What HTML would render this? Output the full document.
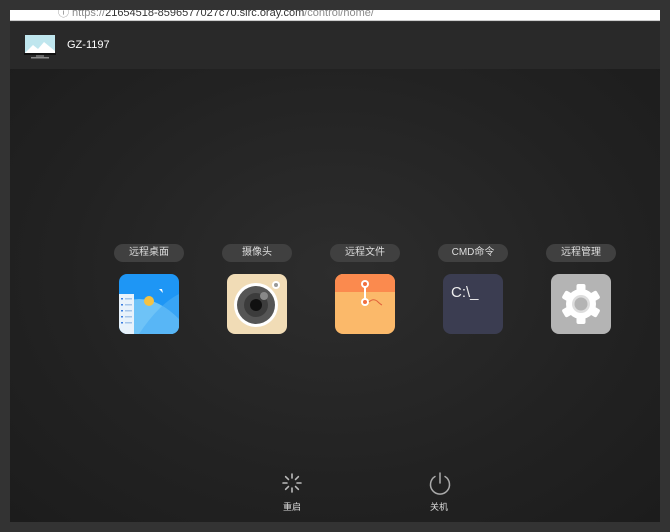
<!DOCTYPE html>
<html><head><meta charset="utf-8"><style>
*{margin:0;padding:0;box-sizing:border-box}
body{width:670px;height:532px;background:#333;position:relative;overflow:hidden;font-family:"Liberation Sans","Noto Sans CJK SC",sans-serif}
.bar{position:absolute;left:10px;top:10px;width:650px;height:11px;background:#fff;border-bottom:1px solid #ccc;overflow:hidden}
.bar span{position:absolute;left:48px;top:-6px;font-size:11px;color:#8a8a8a;white-space:nowrap}
.bar span b{color:#333;font-weight:normal}
.hdr{position:absolute;left:10px;top:22px;width:650px;height:47px;background:#292929}
.main{position:absolute;left:10px;top:69px;width:650px;height:453px;background:radial-gradient(ellipse at 50% 45%,#2d2d2d 0%,#222 60%,#1c1c1c 100%)}
.pill{position:absolute;top:244px;width:70px;height:18px;border-radius:9px;background:#404040;color:#ddd;font-size:10px;text-align:center;line-height:18px}
.ic{position:absolute;top:274px;width:60px;height:60px;border-radius:8px;overflow:hidden}
.lbl{position:absolute;top:500px;color:#ddd;font-size:9px;width:40px;text-align:center}
</style></head><body>
<div class="bar"><span>ⓘ https://<b>21654518-8596577027c70.sirc.oray.com</b>/control/home/</span></div>
<div class="hdr">
<svg style="position:absolute;left:14px;top:12px" width="32" height="26" viewBox="0 0 32 26"><rect x="1" y="1" width="30" height="18" fill="#bfe6ee"/><path d="M1 19 L9 11 L14 15 L20 8 L31 17 L31 19Z" fill="#fff"/><rect x="0" y="19" width="32" height="2" fill="#111"/><rect x="12" y="21" width="8" height="2" fill="#666"/><rect x="7" y="23" width="18" height="1.5" fill="#888"/></svg>
<div style="position:absolute;left:57px;top:17px;color:#fff;font-size:11px">GZ-1197</div>
</div>
<div class="main"></div>
<div class="pill" style="left:114px">远程桌面</div>
<div class="pill" style="left:222px">摄像头</div>
<div class="pill" style="left:330px">远程文件</div>
<div class="pill" style="left:438px">CMD命令</div>
<div class="pill" style="left:546px">远程管理</div>

<div class="ic" style="left:119px;background:#1e96f5">
<svg width="60" height="60"><path d="M0 30 Q30 15 60 45 L60 60 L0 60Z" fill="#6ec3f7"/><path d="M20 60 Q40 30 60 20 L60 60Z" fill="#4aaef5" opacity=".6"/><circle cx="30" cy="27" r="5" fill="#f5c242"/><path d="M40 15 l4 4 l-1 -4z" fill="#fff"/><rect x="0" y="20" width="15" height="40" fill="#e8f2fb"/><g fill="#3a7de0"><rect x="2" y="24" width="2" height="1.5"/><rect x="2" y="30" width="2" height="1.5"/><rect x="2" y="36" width="2" height="1.5"/><rect x="2" y="42" width="2" height="1.5"/><rect x="2" y="48" width="2" height="1.5"/></g><g fill="#a5c5ea"><rect x="6" y="24" width="7" height="1.5"/><rect x="6" y="30" width="7" height="1.5"/><rect x="6" y="36" width="7" height="1.5"/><rect x="6" y="42" width="7" height="1.5"/><rect x="6" y="48" width="7" height="1.5"/></g></svg></div>
<div class="ic" style="left:227px;background:#f1dcb6">
<svg width="60" height="60"><circle cx="29" cy="31" r="22" fill="#fff"/><circle cx="29" cy="31" r="19" fill="#555"/><circle cx="29" cy="31" r="12" fill="#3c3c3c"/><circle cx="29" cy="31" r="6" fill="#111"/><circle cx="37" cy="22" r="4" fill="#888"/><circle cx="49" cy="11" r="4" fill="#fff"/><circle cx="49" cy="11" r="2" fill="#999"/></svg></div>
<div class="ic" style="left:335px;background:#fbb96a">
<svg width="60" height="60"><rect width="60" height="18" fill="#fb8a4e"/><line x1="30" y1="10" x2="30" y2="28" stroke="#fff" stroke-width="2"/><circle cx="30" cy="10" r="4" fill="#fff"/><circle cx="30" cy="10" r="2" fill="#f07040"/><circle cx="30" cy="28" r="4" fill="#fff"/><circle cx="30" cy="28" r="2" fill="#f07040"/><path d="M34 28 Q38 24 42 27 Q45 30 47 31" stroke="#e0603a" fill="none"/></svg></div>
<div class="ic" style="left:443px;background:#3b3d51"><div style="position:absolute;left:8px;top:10px;color:#eee;font-size:15px">C:\_</div></div>
<div class="ic" style="left:551px;background:#b4b4b4">
<svg width="60" height="60" viewBox="0 0 60 60"><g fill="#fff" transform="translate(30,30)"><circle r="15"/><g id="t"><rect x="-4.5" y="-20" width="9" height="8" rx="2"/></g><use href="#t" transform="rotate(60)"/><use href="#t" transform="rotate(120)"/><use href="#t" transform="rotate(180)"/><use href="#t" transform="rotate(240)"/><use href="#t" transform="rotate(300)"/></g><circle cx="30" cy="30" r="9" fill="#ddd"/><circle cx="30" cy="30" r="6.5" fill="#b4b4b4"/></svg></div>

<svg style="position:absolute;left:281px;top:472px" width="22" height="22" viewBox="-11 -11 22 22" stroke="#bbb" stroke-width="1.6" stroke-linecap="round"><g id="r"><line x1="0" y1="-9" x2="0" y2="-5"/></g><use href="#r" transform="rotate(45)"/><use href="#r" transform="rotate(90)"/><use href="#r" transform="rotate(135)"/><use href="#r" transform="rotate(180)"/><use href="#r" transform="rotate(225)"/><use href="#r" transform="rotate(270)"/><use href="#r" transform="rotate(315)"/></svg>
<div class="lbl" style="left:272px">重启</div>
<svg style="position:absolute;left:428px;top:471px" width="24" height="24" viewBox="0 0 24 24" fill="none" stroke="#aaa" stroke-width="1.5" stroke-linecap="round"><path d="M7 5.5 A9.5 9.5 0 1 0 17 5.5"/><line x1="12" y1="2" x2="12" y2="12"/></svg>
<div class="lbl" style="left:419px">关机</div>
</body></html>
